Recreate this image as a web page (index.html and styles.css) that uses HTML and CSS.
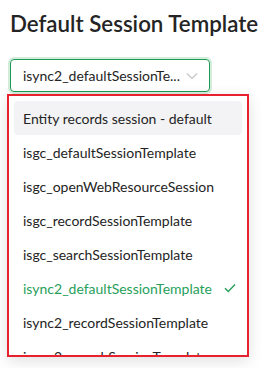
FILE: index.html
```html
<html lang="en">
<head>
    <meta charset="UTF-8">
    <meta name="viewport" content="width=device-width, initial-scale=1.0">
    <title>Default Session Template</title>
    <link rel="stylesheet" href="styles.css">
</head>
<body>
    <div class="page">
        <h1 class="title">Default Session Template</h1>

        <div class="combo">
            <div class="combo-field">
                <span class="combo-value">isync2_defaultSessionTe...</span>
                <svg class="chevron" width="12" height="8" viewBox="0 0 12 8">
                    <path d="M1 1.5 L6 6.5 L11 1.5" fill="none" stroke="#c4c4c4" stroke-width="1.2"/>
                </svg>
            </div>

            <!-- popup list, lies over the page -->
            <div class="listbox-frame">
                <div class="listbox">
                    <div class="option option-hover">Entity records session - default</div>
                    <div class="option">isgc_defaultSessionTemplate</div>
                    <div class="option">isgc_openWebResourceSession</div>
                    <div class="option">isgc_recordSessionTemplate</div>
                    <div class="option">isgc_searchSessionTemplate</div>
                    <div class="option option-selected">
                        <span>isync2_defaultSessionTemplate</span>
                        <svg class="check" width="12" height="10" viewBox="0 0 12 10">
                            <path d="M1 5.2 L4.3 8.5 L11 1.5" fill="none" stroke="#27a05a" stroke-width="1.4"/>
                        </svg>
                    </div>
                    <div class="option">isync2_recordSessionTemplate</div>
                    <div class="option">isync2_searchSessionTemplate</div>
                </div>
            </div>
        </div>
    </div>
</body>
</html>
```

FILE: styles.css
```css
body {
    margin: 0;
    background-color: #fff;
    color: #242424;
    font-family: Lato, "Open Sans", sans-serif;
}
.page {
    padding: 10px 10px 0 10px;
}
.title {
    margin: 0;
    font-size: 22.3px;
    font-weight: 600;
    line-height: 28px;
    white-space: nowrap;
}
.combo {
    position: relative;
    margin-top: 21px;
}
.combo-field {
    width: 200px;
    height: 33px;
    box-sizing: border-box;
    border: 1px solid #1f9a52;
    border-radius: 4px;
    box-shadow: 0 0 0 2px #d3eddc;
    display: flex;
    align-items: center;
    justify-content: space-between;
    padding: 0 11px 0 12px;
    font-size: 14px;
}
.combo-value {
    white-space: nowrap;
}
.chevron {
    display: block;
}
.listbox-frame {
    position: absolute;
    left: -3px;
    top: 35px;
    width: 242px;
    height: 263px;
    box-sizing: border-box;
    border: 2px solid #e8212e;
    box-shadow: 0 4px 14px rgba(0, 0, 0, 0.12);
}
.listbox {
    height: 100%;
    overflow: hidden;
    background-color: #fff;
    padding: 5px 5px 0 5px;
    box-sizing: border-box;
}
.option {
    height: 34px;
    display: flex;
    align-items: center;
    justify-content: space-between;
    padding: 0 6px 0 9px;
    border-radius: 4px;
    font-size: 14px;
    white-space: nowrap;
}
.option-hover {
    background-color: #f3f3f5;
}
.option-selected {
    color: #27a05a;
}
```
